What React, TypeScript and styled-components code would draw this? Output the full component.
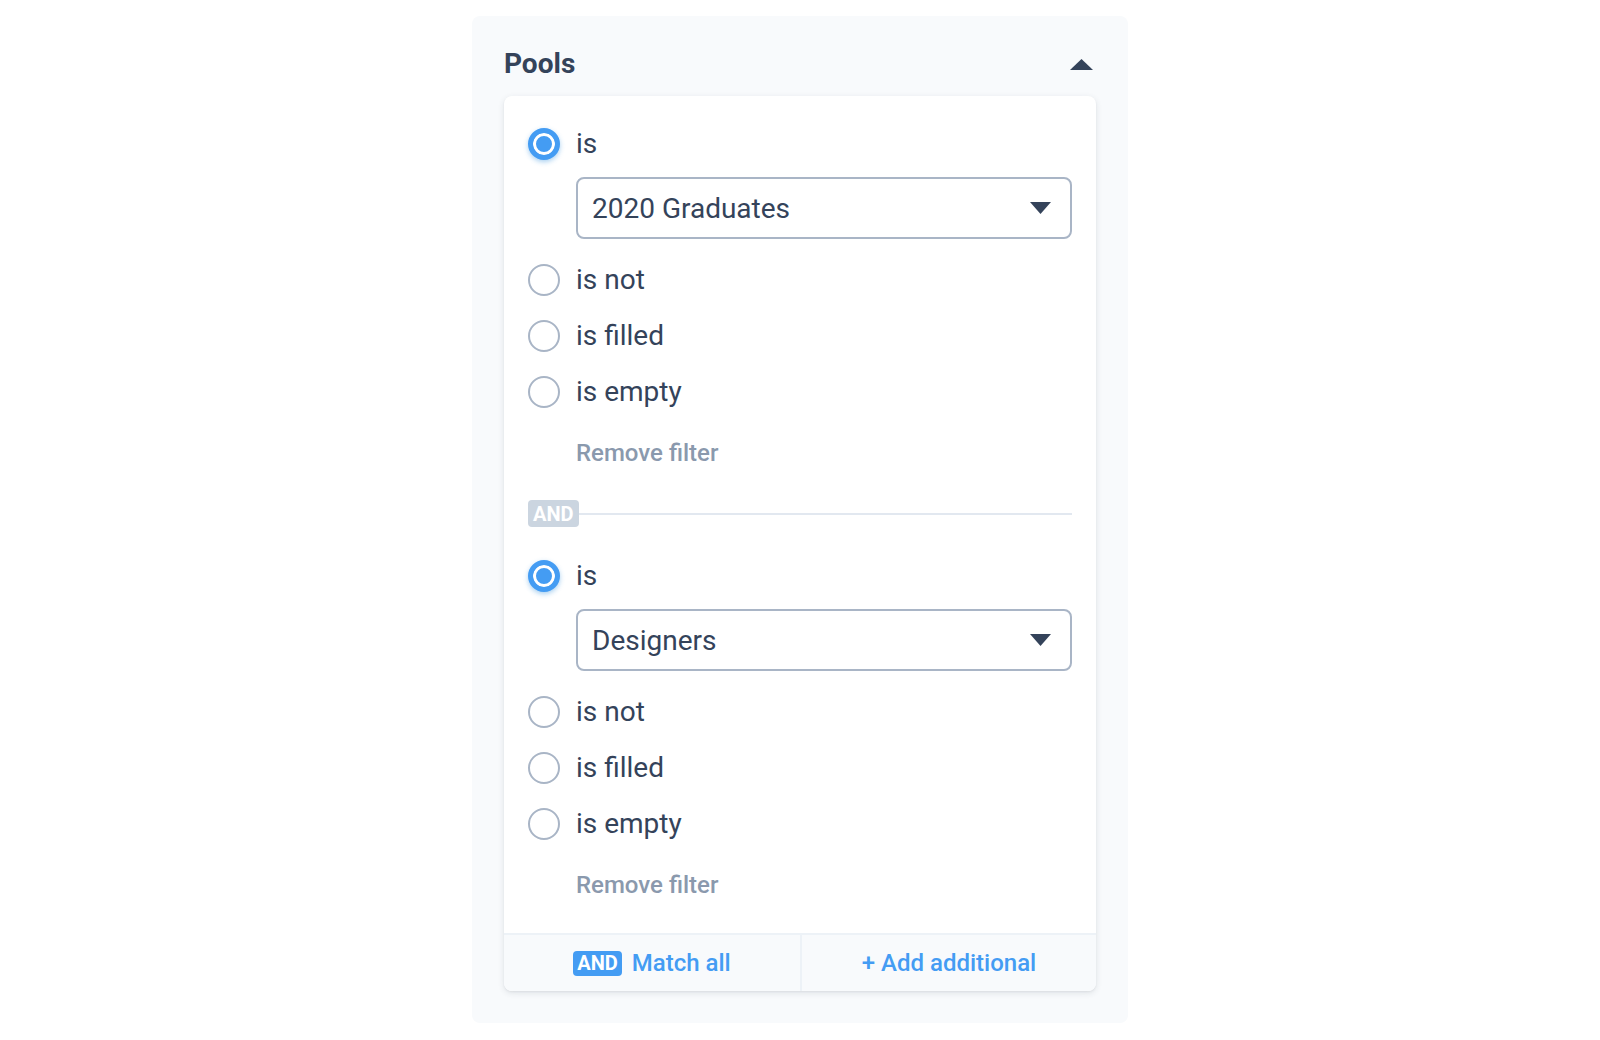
import styled, { createGlobalStyle } from "styled-components";

const GlobalStyle = createGlobalStyle`
    * {
        box-sizing: border-box;
    }
    body {
        margin: 0;
        background-color: #ffffff;
        font-family: Roboto, "Liberation Sans", Arial, sans-serif;
        color: #2d3748;
    }
`;

const blue = "#449cf3";

const Panel = styled.section`
    width: 656px;
    margin: 16px auto;
    padding: 32px;
    background-color: #f8fafc;
    border-radius: 8px;
`;

const PanelHeader = styled.div`
    display: flex;
    align-items: center;
    justify-content: space-between;
    height: 32px;
    margin-bottom: 16px;
    padding-right: 3px;
`;

const Title = styled.h2`
    margin: 0;
    font-size: 28px;
    font-weight: 700;
    line-height: 32px;
    color: #34435a;
`;

const Card = styled.div`
    background-color: #ffffff;
    border-radius: 8px;
    overflow: hidden;
    box-shadow: 0 2px 6px rgba(45, 55, 72, 0.12), 0 1px 2px rgba(45, 55, 72, 0.06);
`;

const CardBody = styled.div`
    padding: 24px 24px 32px 24px;
`;

const FilterBlock = styled.div`
    display: flex;
    flex-direction: column;
`;

const OptionList = styled.div`
    display: flex;
    flex-direction: column;
    gap: 8px;
`;

const OptionRow = styled.label`
    display: flex;
    align-items: center;
    gap: 16px;
    height: 48px;
    font-size: 28px;
    line-height: 32px;
    color: #34435a;
    cursor: pointer;
`;

const Radio = styled.span<{ checked?: boolean }>`
    flex: none;
    width: 32px;
    height: 32px;
    border-radius: 50%;
    border: ${(props) => (props.checked ? `5px solid ${blue}` : "2px solid #a9b5c6")};
    background-color: ${(props) => (props.checked ? blue : "#ffffff")};
    box-shadow: ${(props) =>
        props.checked ? "inset 0 0 0 3px #ffffff, 0 2px 5px rgba(66, 153, 225, 0.45)" : "none"};
`;

const Select = styled.div`
    display: flex;
    align-items: center;
    justify-content: space-between;
    height: 62px;
    margin: 9px 0 17px 48px;
    padding: 0 19px 0 14px;
    border: 2px solid #a9b5c6;
    border-radius: 8px;
    font-size: 28px;
    color: #34435a;
    cursor: pointer;
`;

const RemoveLink = styled.div`
    margin: 21px 0 0 48px;
    font-size: 24px;
    font-weight: 500;
    line-height: 32px;
    color: #8a99ad;
`;

const Divider = styled.div`
    display: flex;
    align-items: center;
    height: 27px;
    margin: 31px 0 25px 0;
`;

const Badge = styled.span<{ tone: "muted" | "blue" }>`
    flex: none;
    display: inline-flex;
    align-items: center;
    justify-content: center;
    height: ${(props) => (props.tone === "blue" ? "25px" : "27px")};
    padding: 0 ${(props) => (props.tone === "blue" ? "4px" : "5px")};
    border-radius: 4px;
    background-color: ${(props) => (props.tone === "blue" ? blue : "#cbd5e0")};
    color: #ffffff;
    font-size: 20px;
    font-weight: 700;
    line-height: 1;
`;

const Line = styled.div`
    flex: 1;
    height: 2px;
    background-color: #e2e8f0;
`;

const Footer = styled.div`
    display: grid;
    grid-template-columns: 1fr 1fr;
    border-top: 2px solid #edf2f7;
    background-color: #f8fafc;
`;

const FooterAction = styled.div<{ divided?: boolean }>`
    display: flex;
    align-items: center;
    justify-content: center;
    gap: 10px;
    height: 56px;
    border-left: ${(props) => (props.divided ? "2px solid #edf2f7" : "none")};
    font-size: 24px;
    font-weight: 500;
    color: ${blue};
    cursor: pointer;
`;

const Caret = ({ up, width, height }: { up?: boolean; width: number; height: number }) => (
    <svg width={width} height={height} viewBox={`0 0 ${width} ${height}`}>
        <polygon
            fill="#34435a"
            points={
                up
                    ? `0,${height} ${width / 2},0 ${width},${height}`
                    : `0,0 ${width},0 ${width / 2},${height}`
            }
        />
    </svg>
);

const otherOptions = ["is not", "is filled", "is empty"];

const filters = [{ value: "2020 Graduates" }, { value: "Designers" }];

function Filter({ value }: { value: string }) {
    return (
        <FilterBlock>
            <OptionRow>
                <Radio checked />
                is
            </OptionRow>
            <Select>
                <span>{value}</span>
                <Caret width={21} height={12} />
            </Select>
            <OptionList>
                {otherOptions.map((option) => (
                    <OptionRow key={option}>
                        <Radio />
                        {option}
                    </OptionRow>
                ))}
            </OptionList>
            <RemoveLink>Remove filter</RemoveLink>
        </FilterBlock>
    );
}

function App() {
    return (
        <>
            <GlobalStyle />
            <Panel>
                <PanelHeader>
                    <Title>Pools</Title>
                    <Caret up width={23} height={11} />
                </PanelHeader>
                <Card>
                    <CardBody>
                        {filters.map((filter, i) => (
                            <div key={filter.value}>
                                {i > 0 && (
                                    <Divider>
                                        <Badge tone="muted">AND</Badge>
                                        <Line />
                                    </Divider>
                                )}
                                <Filter value={filter.value} />
                            </div>
                        ))}
                    </CardBody>
                    <Footer>
                        <FooterAction>
                            <Badge tone="blue">AND</Badge>
                            Match all
                        </FooterAction>
                        <FooterAction divided>+ Add additional</FooterAction>
                    </Footer>
                </Card>
            </Panel>
        </>
    );
}

export default App;
